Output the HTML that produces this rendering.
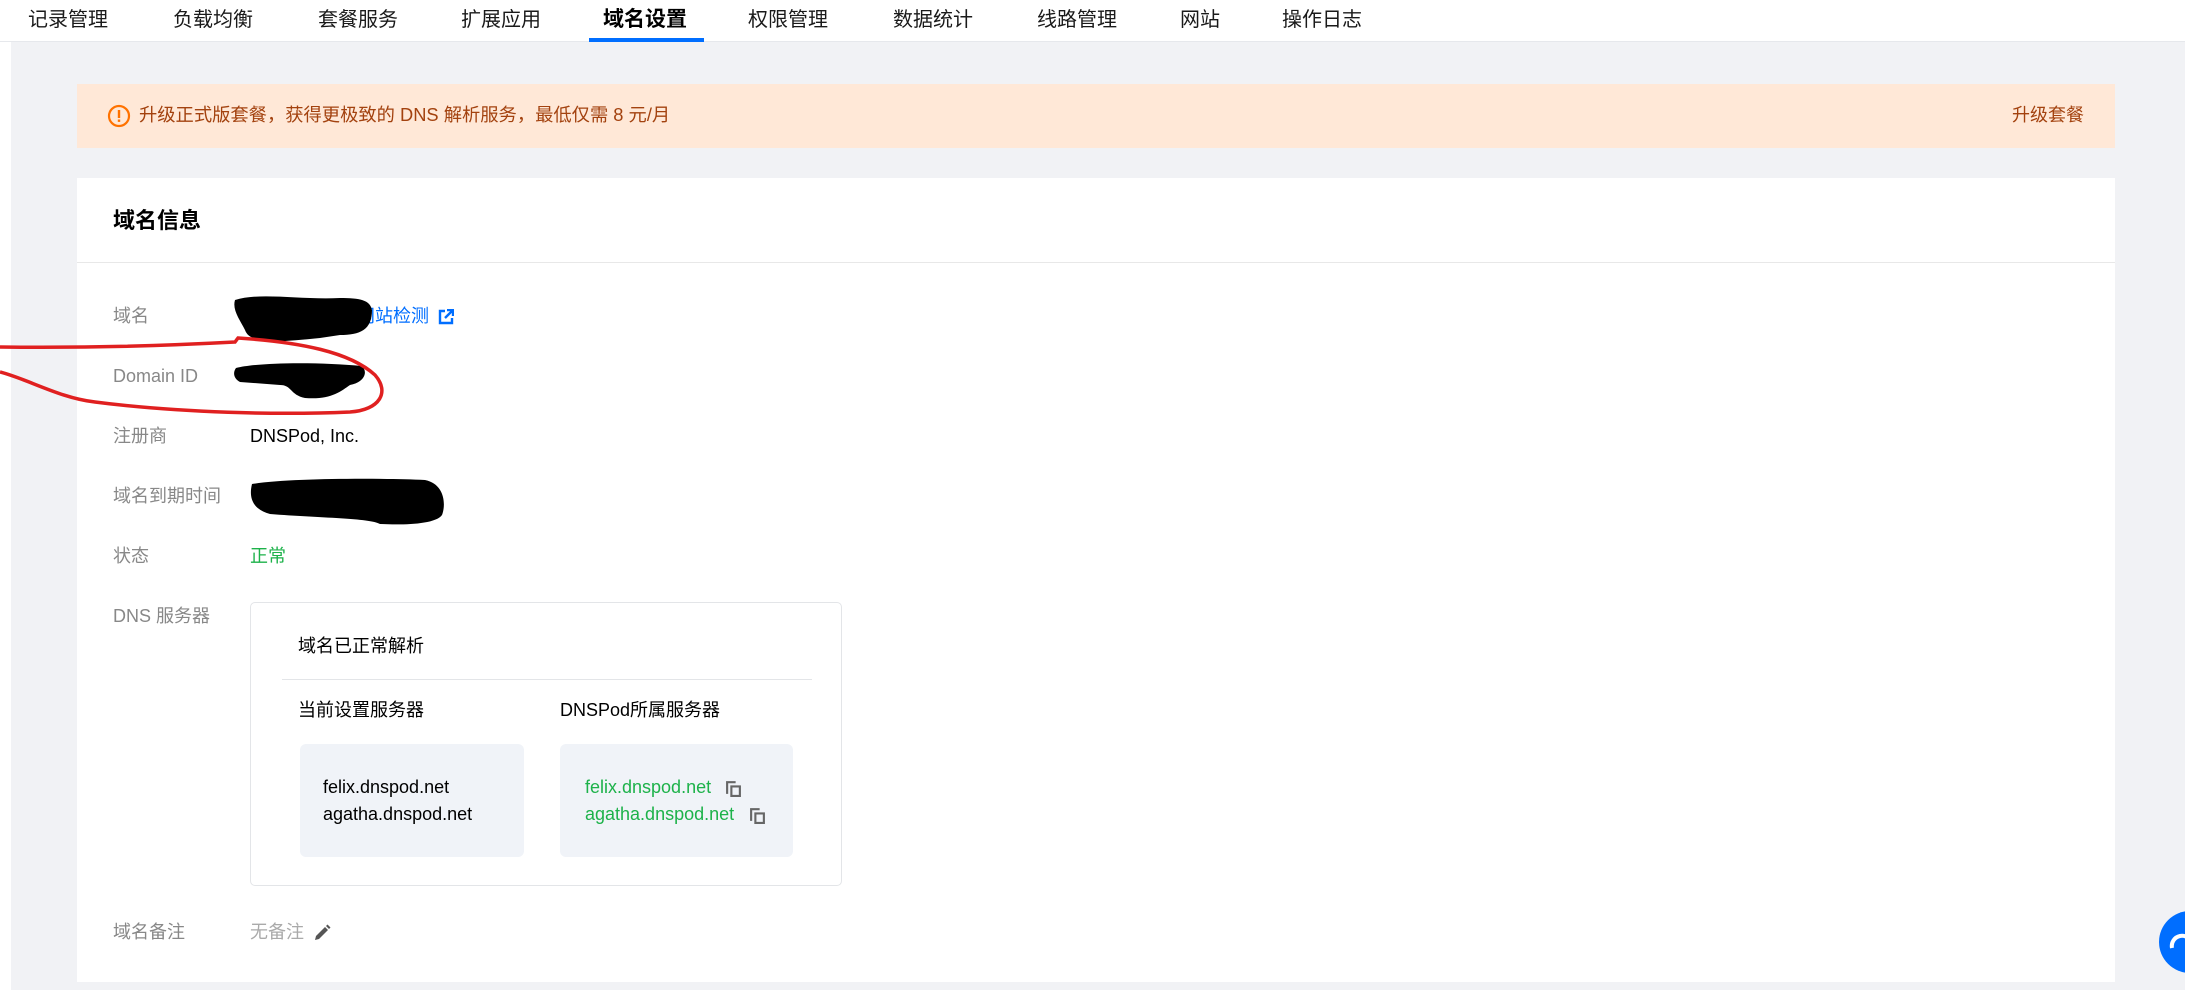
<!DOCTYPE html>
<html><head><meta charset="utf-8"><style>
*{margin:0;padding:0;box-sizing:border-box}
body{width:2185px;height:990px;overflow:hidden;background:#f1f2f5;font-family:"Liberation Sans","Noto Sans CJK SC",sans-serif;position:relative;color:#000}
.abs{position:absolute;white-space:nowrap}
.nav{position:absolute;left:0;top:0;width:2185px;height:42px;background:#fff;border-bottom:1px solid #e6e8ec}
.tab{position:absolute;top:7px;font-size:20px;color:#1a1a1a;line-height:26px}
.strip{position:absolute;left:0;top:42px;width:11px;height:948px;background:#fff}
.banner{position:absolute;left:77px;top:84px;width:2038px;height:64px;background:#ffe8d7}
.card{position:absolute;left:77px;top:178px;width:2038px;height:804px;background:#fff}
.lbl{position:absolute;left:36px;font-size:18px;color:#888;line-height:24px}
.val{position:absolute;left:173px;font-size:18px;line-height:24px}
</style></head><body>
<div class="nav">
<div class="tab" style="left:28px">记录管理</div>
<div class="tab" style="left:173px">负载均衡</div>
<div class="tab" style="left:318px">套餐服务</div>
<div class="tab" style="left:461px">扩展应用</div>
<div class="tab" style="left:603px;font-weight:bold;color:#000;font-size:21px">域名设置</div>
<div style="position:absolute;left:589px;top:38px;width:115px;height:4px;background:#006eff"></div>
<div class="tab" style="left:748px">权限管理</div>
<div class="tab" style="left:893px">数据统计</div>
<div class="tab" style="left:1037px">线路管理</div>
<div class="tab" style="left:1180px">网站</div>
<div class="tab" style="left:1282px">操作日志</div>
</div>
<div class="strip"></div>
<div class="banner">
<svg class="abs" style="left:30px;top:20px" width="24" height="24" viewBox="0 0 24 24"><circle cx="12" cy="12" r="10" fill="none" stroke="#ff7200" stroke-width="2.2"/><rect x="10.8" y="6" width="2.4" height="8" fill="#ff7200"/><rect x="10.8" y="15.5" width="2.4" height="2.4" fill="#ff7200"/></svg>
<div class="abs" style="left:62px;top:19px;font-size:18.3px;color:#a3420f;line-height:24px">升级正式版套餐，获得更极致的 DNS 解析服务，最低仅需 8 元/月</div>
<div class="abs" style="left:1935px;top:19px;font-size:18px;color:#a3420f;line-height:24px">升级套餐</div>
</div>
<div class="card">
<div class="abs" style="left:36px;top:29px;font-size:22px;font-weight:bold;line-height:28px">域名信息</div>
<div style="position:absolute;left:0;top:84px;width:2038px;height:1px;background:#e8e8e8"></div>
<div class="lbl" style="top:126px">域名</div>
<div class="val" style="top:126px;left:280px;color:#006eff">网站检测</div>
<svg class="abs" style="left:361px;top:131px" width="16" height="16" viewBox="0 0 16 16"><path d="M7 2H2v12h12V9" fill="none" stroke="#006eff" stroke-width="2.4"/><path d="M9 1h6v6M15 1L7 9" fill="none" stroke="#006eff" stroke-width="2.4"/></svg>
<div class="lbl" style="top:186px">Domain ID</div>
<div class="lbl" style="top:246px">注册商</div>
<div class="val" style="top:246px">DNSPod, Inc.</div>
<div class="lbl" style="top:306px">域名到期时间</div>
<div class="lbl" style="top:366px">状态</div>
<div class="val" style="top:366px;color:#1db24a">正常</div>
<div class="lbl" style="top:426px">DNS 服务器</div>
<div class="lbl" style="top:742px">域名备注</div>
<div class="val" style="top:742px;color:#aaa">无备注</div>
<svg class="abs" style="left:236px;top:746px" width="18" height="18" viewBox="0 0 18 18"><path d="M2 16l1-4 9-9 3 3-9 9z" fill="#555"/><path d="M13 2l1.5-1.5 3 3L16 5z" fill="#555"/></svg>
<div style="position:absolute;left:173px;top:424px;width:592px;height:284px;border:1px solid #e3e5e8;border-radius:5px">
<div class="abs" style="left:47px;top:31px;font-size:18px;line-height:24px">域名已正常解析</div>
<div style="position:absolute;left:31px;top:76px;width:530px;height:1px;background:#e3e5e8"></div>
<div class="abs" style="left:47px;top:95px;font-size:18px;line-height:24px">当前设置服务器</div>
<div class="abs" style="left:309px;top:95px;font-size:18px;line-height:24px">DNSPod所属服务器</div>
<div style="position:absolute;left:49px;top:141px;width:224px;height:113px;background:#f0f3f8;border-radius:6px">
<div class="abs" style="left:23px;top:30px;font-size:18px;line-height:27px">felix.dnspod.net<br>agatha.dnspod.net</div></div>
<div style="position:absolute;left:309px;top:141px;width:233px;height:113px;background:#f0f3f8;border-radius:6px">
<div class="abs" style="left:25px;top:30px;font-size:18px;line-height:27px;color:#1db24a">felix.dnspod.net<br>agatha.dnspod.net</div>
<svg class="abs" style="left:165px;top:36px" width="17" height="17" viewBox="0 0 16 16"><path d="M1 1h9v2H3v10H1z" fill="#666"/><path d="M5 5h10v11H5z M7 7v7h6V7z" fill="#666" fill-rule="evenodd"/></svg>
<svg class="abs" style="left:189px;top:63px" width="17" height="17" viewBox="0 0 16 16"><path d="M1 1h9v2H3v10H1z" fill="#666"/><path d="M5 5h10v11H5z M7 7v7h6V7z" fill="#666" fill-rule="evenodd"/></svg>
</div>
</div>
</div>
<svg class="abs" style="left:0;top:0" width="2185" height="990" viewBox="0 0 2185 990">
<path d="M235 300 C260 292 300 300 340 298 C360 298 370 300 372 310 C372 330 360 335 340 335 L320 338 C280 342 250 345 245 330 C240 320 232 310 235 300Z" fill="#000"/>
<path d="M236 368 C260 362 320 362 362 366 C368 372 365 382 350 385 C340 392 330 400 305 398 C290 395 292 385 280 385 L240 382 C233 378 233 372 236 368Z" fill="#000"/>
<path d="M252 484 C290 478 380 478 425 480 C445 484 446 505 442 515 C435 525 400 525 380 524 C370 518 320 518 270 514 C255 510 248 500 252 484Z" fill="#000"/>
<path d="M0 347 C80 348 160 346 235 342 L238 338 C300 342 350 352 375 375 C390 392 380 410 350 412 C280 415 180 413 95 402 C60 398 30 380 0 372" fill="none" stroke="#e02020" stroke-width="3.5"/>
<circle cx="2190" cy="942" r="31" fill="#006eff"/>
<path d="M2172 948 a10 10 0 0 1 20 -4" fill="none" stroke="#fff" stroke-width="4"/>
</svg>
</body></html>
